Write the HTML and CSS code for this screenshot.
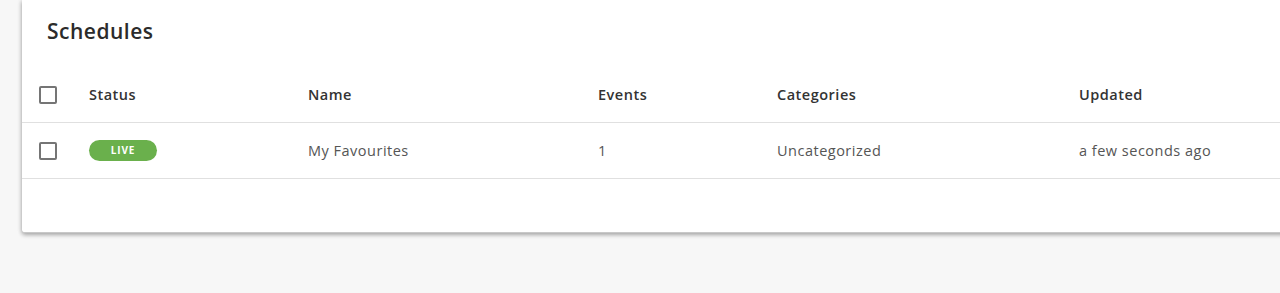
FILE: index.html
```html
<!DOCTYPE html>
<html lang="en">
<head>
  <meta charset="UTF-8" />
  <title>Schedules</title>
  <link rel="stylesheet" href="styles.css">
</head>
<body>
  <div class="card">
    <h2 class="card-title">Schedules</h2>

    <div class="row head">
      <div class="cell"><span class="check"></span></div>
      <div class="cell">Status</div>
      <div class="cell">Name</div>
      <div class="cell">Events</div>
      <div class="cell">Categories</div>
      <div class="cell">Updated</div>
    </div>

    <div class="row">
      <div class="cell"><span class="check"></span></div>
      <div class="cell"><span class="badge">LIVE</span></div>
      <div class="cell">My Favourites</div>
      <div class="cell">1</div>
      <div class="cell">Uncategorized</div>
      <div class="cell">a few seconds ago</div>
    </div>

    <div class="card-foot"></div>
  </div>
</body>
</html>
```

FILE: styles.css
```css
* {
  margin: 0;
  padding: 0;
  box-sizing: border-box;
}

html, body {
  min-height: 100%;
}

body {
  font-family: "Open Sans", Arial, sans-serif;
  background-color: #f7f7f7;
  color: #333;
  padding-bottom: 40px;
}

.card {
  background: #fff;
  margin-left: 22px;
  width: 1300px;
  border-radius: 0 0 3px 3px;
  border-bottom: 1px solid #c8c8c8;
  box-shadow: 0 2px 4px rgba(0, 0, 0, 0.3), -1px 0 4px rgba(0, 0, 0, 0.1);
}

.card-title {
  font-size: 21px;
  font-weight: 600;
  color: #2b2b2b;
  height: 67px;
  padding: 17px 0 0 25px;
  letter-spacing: 0.5px;
}

.row {
  display: grid;
  grid-template-columns: 50px 219px 290px 179px 302px 1fr;
  align-items: center;
  height: 56px;
  padding-left: 17px;
  border-bottom: 1px solid #e0e0e0;
  font-size: 14.5px;
  color: #555;
  letter-spacing: 0.5px;
}

.row.head {
  font-weight: 600;
  color: #333;
}

.cell {
  display: flex;
  align-items: center;
}

.check {
  display: block;
  width: 18px;
  height: 18px;
  border: 2px solid #757575;
  border-radius: 2px;
}

.badge {
  display: inline-block;
  width: 68px;
  height: 21px;
  line-height: 21px;
  border-radius: 11px;
  background: #6ab04c;
  color: #fff;
  font-size: 10px;
  font-weight: 700;
  text-align: center;
  letter-spacing: 0.9px;
}

.card-foot {
  height: 53px;
}
```
